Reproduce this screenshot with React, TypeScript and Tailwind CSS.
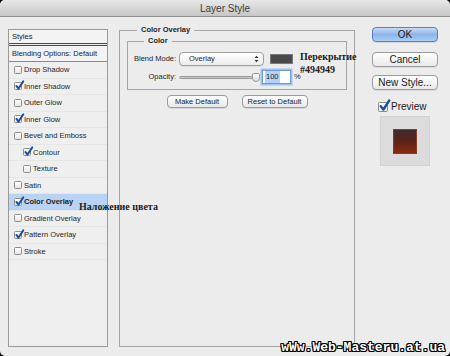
import React from "react";

const sans = { fontFamily: '"Liberation Sans", Arial, sans-serif' };
const serif = { fontFamily: '"Liberation Serif", "Times New Roman", serif' };

function Check({ checked, size = 8 }: { checked?: boolean; size?: number }) {
  return (
    <span
      className="relative inline-block shrink-0 rounded-[1.5px] border border-[#8c8c8c] bg-gradient-to-b from-white to-[#e6e6e6]"
      style={{ width: size, height: size }}
    >
      {checked && (
        <svg
          viewBox="0 0 10 10"
          className="absolute overflow-visible"
          style={{ left: 0, top: -size * 0.25, width: size * 1.1, height: size * 1.1 }}
        >
          <path d="M1.6 5.6 L4 8.6 L9.4 0.4" fill="none" stroke="#1d4e9e" strokeWidth="2.2" strokeLinecap="round" strokeLinejoin="round" />
        </svg>
      )}
    </span>
  );
}

const effects = [
  { label: "Drop Shadow", on: false },
  { label: "Inner Shadow", on: true },
  { label: "Outer Glow", on: false },
  { label: "Inner Glow", on: true },
  { label: "Bevel and Emboss", on: false },
  { label: "Contour", on: true, sub: true },
  { label: "Texture", on: false, sub: true },
  { label: "Satin", on: false },
  { label: "Color Overlay", on: true, active: true },
  { label: "Gradient Overlay", on: false },
  { label: "Pattern Overlay", on: true },
  { label: "Stroke", on: false },
];

function MacButton({ children, w, primary }: { children: React.ReactNode; w: string; primary?: boolean }) {
  return (
    <div
      className={
        "flex items-center justify-center whitespace-nowrap rounded-[4px] border text-[#1a1a1a] shadow-[0_1px_0_rgba(0,0,0,0.08)] " +
        w +
        (primary
          ? " border-[#5b7fb8] bg-gradient-to-b from-[#c9dcf6] via-[#8db5ea] to-[#a9ccf4]"
          : " border-[#9c9c9c] bg-gradient-to-b from-white via-[#f4f4f4] to-[#e8e8e8]")
      }
    >
      {children}
    </div>
  );
}

export default function App() {
  return (
    <div className="relative h-[356px] w-[450px] overflow-hidden bg-black" style={sans}>
      <div className="flex h-full flex-col overflow-hidden rounded-[5px] bg-[#ececec]">
        {/* title bar */}
        <div className="flex h-[17px] shrink-0 items-center justify-center border-b border-[#909090] bg-gradient-to-b from-[#e8e8e8] to-[#c6c6c6] text-[10px] text-[#3b3b3b]">
          Layer Style
        </div>

        <div className="flex min-h-0 flex-1 pb-[9px] pl-[8px] pt-[12px]">
          {/* styles list */}
          <div className="relative flex w-[100px] flex-col border border-[#999] bg-[#efefef] text-[7.5px] text-[#1e1e1e]">
            <div className="flex h-[13px] items-center bg-[#f3f3f3] pl-[3px]">Styles</div>
            <div className="border-t-[3px] border-double border-[#4a4a4a]" />
            <div className="flex h-[16px] items-center border-b border-[#8a8a8a] bg-[#f3f3f3] pl-[3px]">
              Blending Options: Default
            </div>
            {effects.map((e) => (
              <div
                key={e.label}
                className={
                  "flex h-[16.5px] items-center gap-[2px] border-b border-[#e6e6e6] " +
                  (e.sub ? "pl-[14px] " : "pl-[5px] ") +
                  (e.active ? "bg-[#b9d3f4]" : "")
                }
              >
                <Check checked={e.on} />
                <span className={e.active ? "font-bold" : ""}>{e.label}</span>
              </div>
            ))}
            <div
              className="absolute left-[70px] top-[169px] whitespace-nowrap text-[10px] font-bold text-[#202020]"
              style={serif}
            >
              Наложение цвета
            </div>
          </div>

          {/* main settings */}
          <fieldset className="ml-[11px] mt-[-4px] w-[236px] border border-[#a5a5a5] px-[7px] text-[7.5px] text-[#1e1e1e]">
            <legend className="ml-[10px] px-[4px] font-bold leading-[10px]">Color Overlay</legend>
            <fieldset className="relative mt-[1px] border border-[#a5a5a5] pb-[5px] pl-[6px]">
              <legend className="ml-[10px] px-[4px] font-bold leading-[10px]">Color</legend>
              <div className="mt-[6px] flex h-[14px] items-center">
                <span className="w-[42px] whitespace-nowrap text-right">Blend Mode:</span>
                <div className="ml-[3px] flex h-[14px] w-[85px] items-center justify-between rounded-[4px] border border-[#a0a0a0] bg-gradient-to-b from-white to-[#ececec] pl-[9px] pr-[4px] shadow-[0_1px_0_rgba(0,0,0,0.06)]">
                  <span>Overlay</span>
                  <svg width="5" height="8" viewBox="0 0 5 8">
                    <path d="M0.5 3 L2.5 0.8 L4.5 3 Z M0.5 5 L2.5 7.2 L4.5 5 Z" fill="#333" />
                  </svg>
                </div>
                <div className="ml-[6px] h-[10px] w-[23px] border border-[#7a7a7a] bg-[#494949]" />
              </div>
              <div className="mt-[4px] flex h-[14px] items-center">
                <span className="w-[42px] whitespace-nowrap text-right">Opacity:</span>
                <div className="relative ml-[3px] h-[3px] w-[78px] rounded-full border border-[#9a9a9a] bg-gradient-to-b from-[#b5b5b5] to-[#d9d9d9]">
                  <div className="absolute right-[-4px] top-[-4px] h-[9px] w-[8px] rounded-b-[4px] rounded-t-[2px] border border-[#9a9a9a] bg-gradient-to-b from-white to-[#dedede]" />
                </div>
                <div className="ml-[5px] flex h-[14px] w-[29px] items-center border border-[#6d9ad8] bg-white pl-[2px] shadow-[0_0_0_1.5px_#9cc1ef]">
                  <span className="bg-[#b5d1f5] px-[1px] text-[7.5px]">100</span>
                </div>
                <span className="ml-[3px]">%</span>
              </div>
              <div
                className="absolute left-[172px] top-[4px] whitespace-nowrap text-[10px] font-bold leading-[13px] text-[#1c1c1c]"
                style={serif}
              >
                Перекрытие
                <br />
                #494949
              </div>
            </fieldset>
            <div className="mt-[5px] flex justify-center gap-[14px]">
              <MacButton w="w-[61px] h-[13px]">Make Default</MacButton>
              <MacButton w="w-[66px] h-[13px]">Reset to Default</MacButton>
            </div>
          </fieldset>

          {/* buttons */}
          <div className="ml-[17px] mt-[-2px] flex w-[66px] flex-col text-[10px]">
            <MacButton w="h-[15px] w-[66px]" primary>
              OK
            </MacButton>
            <div className="mt-[10px]">
              <MacButton w="h-[15px] w-[66px]">Cancel</MacButton>
            </div>
            <div className="mt-[8px]">
              <MacButton w="h-[15px] w-[66px]">New Style...</MacButton>
            </div>
            <div className="mt-[9px] flex items-center gap-[3px] pl-[6px]">
              <Check checked size={10} />
              <span className="text-[#1a1a1a]">Preview</span>
            </div>
            <div className="ml-[8px] mt-[2px] flex h-[50px] w-[50px] items-center justify-center border border-[#d2d2d2] bg-[#dcdcdc]">
              <div className="h-[25px] w-[24px] border border-[#8a3a1a] bg-gradient-to-b from-[#40292a] via-[#5a2218] to-[#8a2a0e]" />
            </div>
          </div>
        </div>
      </div>

      {/* watermark */}
      <div
        className="absolute bottom-[2px] right-[5px] text-[13px] font-bold leading-[12px] text-white"
        style={{
          fontFamily: '"Liberation Mono", "DejaVu Sans Mono", monospace',
          textShadow:
            "1px 0 0 #000, -1px 0 0 #000, 0 1px 0 #000, 0 -1px 0 #000, 1px 1px 0 #000, -1px -1px 0 #000, 1px -1px 0 #000, -1px 1px 0 #000",
        }}
      >
        wWw.Web-Masteru.at.ua
      </div>
    </div>
  );
}
